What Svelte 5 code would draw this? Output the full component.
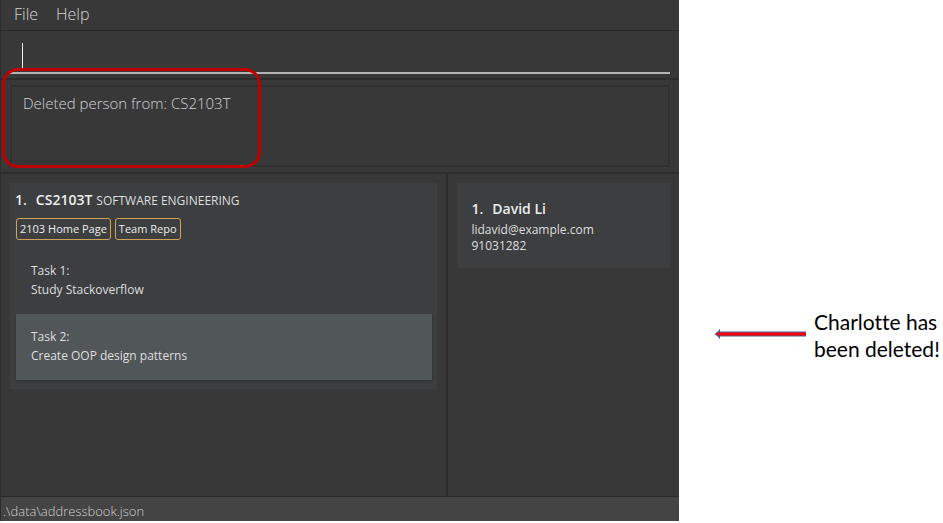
<script>
  const menus = ['File', 'Help'];
  const links = ['2103 Home Page', 'Team Repo'];
  const tasks = [
    { title: 'Task 1:', text: 'Study Stackoverflow', selected: false },
    { title: 'Task 2:', text: 'Create OOP design patterns', selected: true },
  ];
  let command = $state('');
</script>

<div class="page">
  <div class="app">
    <nav class="menu">
      {#each menus as menu}
        <button type="button">{menu}</button>
      {/each}
    </nav>

    <div class="command">
      <div class="field">
        <input type="text" aria-label="Command" bind:value={command} />
        <span class="caret"></span>
      </div>
    </div>

    <section class="result">
      <output>Deleted person from: CS2103T</output>
      <div class="highlight"></div>
    </section>

    <main>
      <section class="modules">
        <article class="module">
          <h2>1.<b>CS2103T</b><span>SOFTWARE ENGINEERING</span></h2>
          <div class="links">
            {#each links as link}
              <a href="#{link}">{link}</a>
            {/each}
          </div>
          <ul>
            {#each tasks as task}
              <li class:selected={task.selected}>
                <p>{task.title}</p>
                <p>{task.text}</p>
              </li>
            {/each}
          </ul>
        </article>
      </section>
      <section class="people">
        <article class="person">
          <h2>1.<b>David Li</b></h2>
          <p>lidavid@example.com</p>
          <p>91031282</p>
        </article>
      </section>
    </main>

    <footer>.\data\addressbook.json</footer>
  </div>

  <aside>
    <svg width="93" height="12" viewBox="0 0 93 12" aria-hidden="true">
      <path d="M5.500 1v10" stroke="#8497b8" stroke-width="1" />
      <path d="M92 3.500H6V1.500L.5 6 6 10.500V8.500H92z" fill="#4a5c96" />
      <path d="M92 4.500H4L2.500 6 4 7.500H92z" fill="#fb0006" />
    </svg>
    <p>Charlotte has<br />been deleted!</p>
  </aside>
</div>

<style>
  :global(body) {
    margin: 0;
    background: #fff;
  }
  .page {
    box-sizing: border-box;
    display: flex;
    min-height: 100vh;
    padding-bottom: 2px;
    font-family: 'Open Sans', 'Noto Sans', sans-serif;
  }
  h2, p, ul {
    margin: 0;
    padding: 0;
    list-style: none;
  }
  .app {
    box-sizing: border-box;
    flex: 0 0 72%;
    display: flex;
    flex-direction: column;
    background: #383838;
    border-left: 1px solid #2c2c2c;
    color: #dfdfdf;
  }
  .menu {
    display: flex;
    gap: 18px;
    padding: 2px 13px 4px;
    border-bottom: 1px solid #2b2b2b;
  }
  .menu button {
    padding: 0;
    border: 0;
    background: none;
    color: #d4d4d4;
    font: 300 16px/24px 'Open Sans', sans-serif;
  }
  .command {
    padding: 5px 9px 4px;
    border-bottom: 2px solid #2d2d2d;
  }
  .field {
    display: flex;
    position: relative;
    border-bottom: 2px solid #b4b4b4;
  }
  input {
    flex: 1;
    height: 36px;
    box-sizing: border-box;
    padding: 0 12px;
    border: 0;
    outline: 0;
    background: transparent;
    color: #fff;
    font: 300 16px 'Open Sans', sans-serif;
  }
  .caret {
    position: absolute;
    left: 12px;
    top: 7px;
    width: 1px;
    height: 25px;
    background: #eee;
  }
  .result {
    position: relative;
    padding: 5px 9px;
    border-bottom: 2px solid #2d2d2d;
  }
  output {
    box-sizing: border-box;
    display: block;
    min-height: 82px;
    padding: 6px 11px;
    border: 2px solid #303030;
    color: #d0d4d8;
    font-size: 15px;
    font-weight: 300;
    line-height: 20px;
  }
  .highlight {
    position: absolute;
    left: 1px;
    top: -12px;
    box-sizing: border-box;
    width: 259px;
    height: 100px;
    border: 3px solid #c00000;
    border-radius: 16px;
  }
  main {
    flex: 1;
    display: flex;
  }
  .modules,
  .people {
    box-sizing: border-box;
    padding: 9px;
  }
  .modules {
    flex: 1;
    border-right: 2px solid #2d2d2d;
  }
  .people {
    flex: 0 0 34%;
  }
  .module {
    padding: 7px 5px 9px;
    background: #3c3e3f;
  }
  h2 {
    display: flex;
    align-items: baseline;
    font-size: 14px;
    font-weight: 600;
    line-height: 20px;
    color: #eee;
  }
  h2 b {
    margin-left: 9px;
    font-weight: 600;
  }
  h2 span {
    margin-left: 4px;
    font-size: 12px;
    font-weight: 400;
    color: #dfdfdf;
  }
  .links {
    display: flex;
    gap: 4px;
    padding: 7px 1px 8px;
  }
  .links a {
    padding: 0 3px;
    border: 1px solid #d0a454;
    border-radius: 3px;
    color: #eee;
    font-size: 11px;
    line-height: 20px;
    text-decoration: none;
  }
  ul {
    padding-left: 1px;
  }
  li {
    padding: 13px 15px 15px;
    font-size: 12px;
    line-height: 19px;
  }
  .selected {
    background: #515658;
    box-shadow: 0 1px 2px #2d2f30;
  }
  .person {
    padding: 16px 14px 14px;
    background: #3c3e3f;
    font-size: 12px;
    line-height: 16px;
  }
  .person h2 {
    margin-bottom: 3px;
  }
  footer {
    padding: 4px 2px 0;
    border-top: 1px solid #2b2b2b;
    background: #444;
    color: #d0d0d0;
    font-size: 13px;
    font-weight: 300;
    line-height: 20px;
  }
  aside {
    flex: 1;
    display: flex;
    align-items: flex-start;
    gap: 7px;
    padding: 308px 0 0 35px;
    color: #000;
    font-family: Lato, sans-serif;
    font-size: 21px;
    font-variant-ligatures: none;
    line-height: 27px;
    white-space: nowrap;
  }
  svg {
    flex: none;
    margin-top: 20px;
  }
</style>
